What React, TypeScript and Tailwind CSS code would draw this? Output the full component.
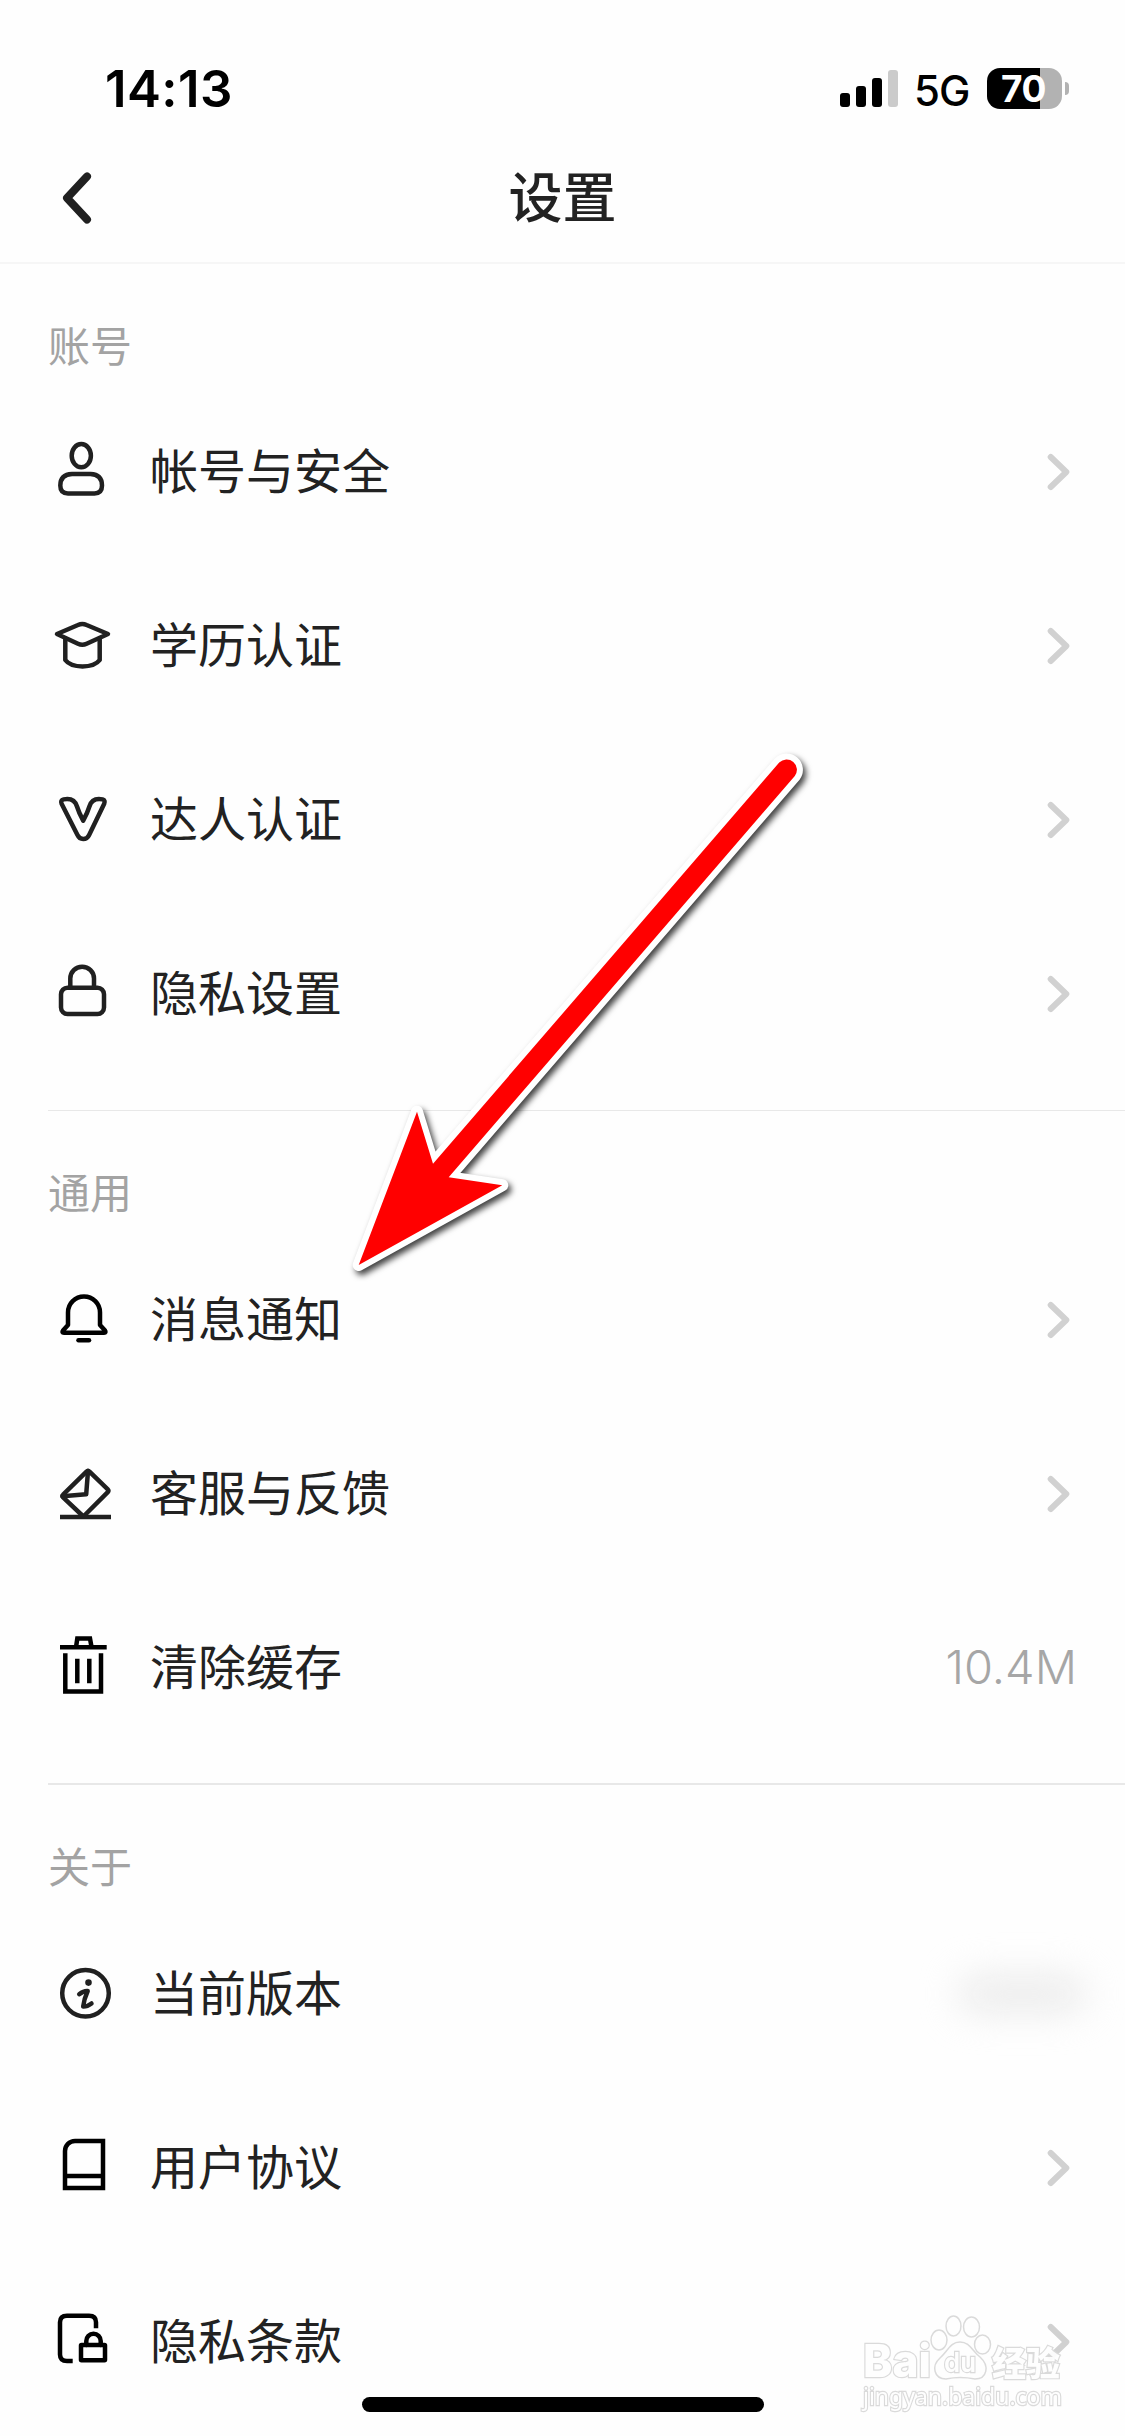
import type { ReactNode } from "react";

const icons: Record<string, ReactNode> = {
  user: (
    <>
      <ellipse cx="33.3" cy="18.7" rx="9.6" ry="11.6" />
      <path d="M24 36.9H42.5Q54 37.4 54 48.5Q54 56.4 46.5 56.4H20Q12.3 56.4 12.3 48.5Q12.3 37.4 24 36.9Z" />
    </>
  ),
  cap: (
    <>
      <path d="M9 23L30 14Q34.3 12 38.6 14L60 23L38.6 32.7Q34.3 34.8 30 32.7Z" />
      <path d="M17.3 27.5V49Q22 55.4 34.5 55.4T51.7 49V27.5" />
    </>
  ),
  vip: (
    <path d="M15.6 14.4Q26.3 12.4 29 21.5Q31 28 35.2 35.7Q39.4 28 41.4 21.5Q44.1 12.4 54.6 14.4Q57.6 15.2 56.2 18.8L41 50.2Q39.2 54 35.2 54T29.6 50.2L13.6 18.8Q12.2 15.2 15.6 14.4Z" />
  ),
  lock: (
    <>
      <rect x="13" y="28.7" width="43" height="26.3" rx="6.5" />
      <path d="M22.3 28.7V19.5A11.85 11.85 0 0 1 46 19.5V28.7" />
    </>
  ),
  bell: (
    <>
      <path d="M20 40V27.5A16 16 0 0 1 52 27.5V40L57 45.5Q58.5 47.7 56 47.7H16Q13.4 47.7 15 45.5Z" />
      <path d="M30.5 55.2H41" />
    </>
  ),
  feedback: (
    <>
      <path d="M38.5 12.7Q40 11.2 41.5 12.7L59.8 30.3Q61.2 31.7 59.8 33.1L35.4 57.5L15.1 38.4Q13.6 37 15.1 35.6Z" />
      <path d="M40 12L38.2 35.3L14.5 37.2" />
      <path d="M12 58H63" strokeLinecap="butt" />
    </>
  ),
  trash: (
    <g strokeLinecap="butt" strokeLinejoin="miter">
      <path d="M12 14.3H58.7M28 14.3L29.3 5.6H42L43.6 14.3M17.3 20.3V58.5H53V20.3M29.3 25.7V50.3M41.3 25.7V50.3" />
    </g>
  ),
  info: (
    <>
      <circle cx="37.5" cy="34.3" r="23.3" />
      <circle cx="40.5" cy="23.6" r="1.7" strokeWidth="3.2" />
      <path d="M31.2 35.2Q36 31.5 39.7 32Q36 40 35.2 47.6Q39 47.8 43.5 44.5" />
    </>
  ),
  book: (
    <path
      d="M27 8H55V55H17V18A10 10 0 0 1 27 8ZM17 43H55"
      strokeLinejoin="miter"
    />
  ),
  privacy: (
    <>
      <path
        d="M24.7 54H19Q12 54 12 47.5V15.2Q12 8.7 19 8.7H41Q48 8.7 48 15.2V21.3"
        strokeLinecap="butt"
      />
      <rect x="33" y="38" width="24" height="15.3" rx="0.5" />
      <path d="M38.3 38V34A7.2 7.2 0 0 1 52.7 34V38" />
    </>
  ),
};

function RowIcon({ name, black }: { name: string; black?: boolean }) {
  return (
    <svg
      width="70"
      height="70"
      viewBox="0 0 70 70"
      fill="none"
      stroke={black ? "#000" : "#202020"}
      strokeWidth="4.5"
      strokeLinecap="round"
      strokeLinejoin="round"
      className="shrink-0"
    >
      {icons[name]}
    </svg>
  );
}

function Chevron() {
  return (
    <svg
      width="24"
      height="38"
      viewBox="0 0 24 38"
      fill="none"
      stroke="#d1d1d1"
      strokeWidth="6"
      strokeLinecap="round"
      strokeLinejoin="round"
      className="mr-[4px]"
    >
      <path d="M3.7 4L19.3 19L3.7 34" />
    </svg>
  );
}

type RowProps = {
  icon: string;
  label: string;
  black?: boolean;
  trailing?: ReactNode;
};

function Row({ icon, label, black, trailing = <Chevron /> }: RowProps) {
  return (
    <li className="flex h-[174px] items-center pr-[50px] pl-12">
      <RowIcon name={icon} black={black} />
      <span className="ml-[32px] flex-1 pb-[9px] text-[48px] leading-[70px] text-[#222]">
        {label}
      </span>
      {trailing}
    </li>
  );
}

function SectionTitle({ children }: { children: ReactNode }) {
  return (
    <h2 className="flex h-[122px] items-center pt-[38px] pl-12 text-[42px] leading-[60px] text-[#a3a3a3]">
      {children}
    </h2>
  );
}

function StatusBar() {
  return (
    <div className="flex h-[132px] items-start justify-between pr-[56px] pl-[105px] font-[Inter] text-black">
      <span className="mt-[59px] text-[51px] leading-[60px] font-semibold tracking-[0.4px]">
        14:13
      </span>
      <div className="mt-[68px] flex items-start">
        <div className="mt-[2px] flex h-[37px] items-end gap-[6px]">
          <i className="h-[14px] w-[10px] rounded-[3px] bg-black" />
          <i className="h-[21px] w-[10px] rounded-[3px] bg-black" />
          <i className="h-[29px] w-[10px] rounded-[3px] bg-black" />
          <i className="h-[37px] w-[10px] rounded-[3px] bg-[#cbcbcb]" />
        </div>
        <span className="ml-[16px] w-[73px] pt-px text-[42px] leading-[44px] font-medium tracking-[-1px]">
          5G
        </span>
        <div className="flex h-[41px] w-[75px] items-center justify-center rounded-[13px] bg-[linear-gradient(90deg,#000_53px,#b2b2b2_53px)] pr-[2px] text-[37px] leading-[41px] font-bold tracking-[-0.5px] text-white">
          70
        </div>
        <i className="mt-[14px] ml-[3px] h-[13px] w-[4px] rounded-r-full bg-[#b2b2b2]" />
      </div>
    </div>
  );
}

function Watermark() {
  return (
    <svg
      width="220"
      height="110"
      viewBox="0 0 220 110"
      className="absolute right-[45px] bottom-[16px]"
      fill="#fefefe"
      stroke="#d9d9d9"
      strokeWidth="1.5"
      opacity="0.95"
    >
      <g>
        <ellipse cx="79" cy="30" rx="8" ry="10" />
        <ellipse cx="93.5" cy="16" rx="7.5" ry="10" />
        <ellipse cx="111.5" cy="17" rx="8" ry="10" />
        <ellipse cx="122.5" cy="34.5" rx="8" ry="9.5" />
        <path d="M100 32C110 32 112 41 120 47C130 56 127 69 115 69Q100 66 86 69C74 69 71 56 80 48C88 41 90 32 100 32Z" />
      </g>
      <g
        fontFamily="Inter, 'Noto Sans CJK SC', sans-serif"
        strokeWidth="2.4"
        paintOrder="stroke"
      >
        <text x="3" y="67" fontSize="45" fontWeight="800" textLength="68" lengthAdjust="spacingAndGlyphs">
          Bai
        </text>
        <text x="84" y="62" fontSize="27" fontWeight="600" textLength="32" lengthAdjust="spacingAndGlyphs">
          du
        </text>
        <text x="132" y="66" fontSize="34" fontWeight="900" textLength="68">
          经验
        </text>
        <text x="3" y="95" fontSize="24" fontFamily="'Noto Sans', sans-serif" textLength="199" lengthAdjust="spacingAndGlyphs">
          jingyan.baidu.com
        </text>
      </g>
    </svg>
  );
}

function PointerArrow() {
  return (
    <svg
      width="480"
      height="560"
      viewBox="340 740 480 560"
      className="pointer-events-none absolute top-[740px] left-[340px] drop-shadow-[3px_4px_3px_rgba(0,0,0,0.75)]"
    >
      <path
        d="M358.7 1265L417 1111.7L433 1163.7L779.2 762.6A10.3 10.3 0 0 1 794.8 776L448.7 1177.3L502.3 1185.3Z"
        fill="#f00"
        stroke="#fff"
        strokeWidth="12"
        strokeLinejoin="round"
        paintOrder="stroke"
      />
    </svg>
  );
}

export default function App() {
  return (
    <main className="relative h-[2436px] w-[1125px] overflow-hidden bg-[#fefefe] font-['Noto_Sans_CJK_SC',sans-serif]">
      <header className="h-[264px] border-b-2 border-[#f6f6f6]">
        <StatusBar />
        <div className="grid h-[130px] grid-cols-[1fr_auto_1fr] items-center">
          <svg
            width="40"
            height="60"
            viewBox="0 0 40 60"
            fill="none"
            stroke="#202020"
            strokeWidth="8"
            strokeLinecap="round"
            strokeLinejoin="round"
            className="ml-[56px]"
          >
            <path d="M31 9.5L11 31L31 52.5" />
          </svg>
          <h1 className="pb-[4px] text-[54px] leading-[80px] font-medium text-[#222]">
            设置
          </h1>
        </div>
      </header>

      <section className="h-[847px]">
        <SectionTitle>账号</SectionTitle>
        <ul className="-mt-px">
          <Row icon="user" label="帐号与安全" />
          <Row icon="cap" label="学历认证" />
          <Row icon="vip" label="达人认证" />
          <Row icon="lock" label="隐私设置" />
        </ul>
        <hr className="mt-[29px] ml-12 border-[#e8e8e8]" />
      </section>

      <section className="h-[674px]">
        <SectionTitle>通用</SectionTitle>
        <ul>
          <Row icon="bell" label="消息通知" black />
          <Row icon="feedback" label="客服与反馈" />
          <Row
            icon="trash"
            label="清除缓存"
            black
            trailing={
              <span className="-mr-[2px] pb-[3px] font-[Inter] text-[47px] leading-[60px] font-[350] text-[#a6a6a6]">
                10.4M
              </span>
            }
          />
        </ul>
        <hr className="mt-[28px] ml-12 border-t-2 border-[#e8e8e8]" />
      </section>

      <section>
        <SectionTitle>关于</SectionTitle>
        <ul>
          <Row
            icon="info"
            label="当前版本"
            trailing={
              <span className="-mr-[10px] h-[36px] w-[126px] rounded-full bg-[#ebebeb] blur-[18px]" />
            }
          />
          <Row icon="book" label="用户协议" black />
          <Row icon="privacy" label="隐私条款" black />
        </ul>
      </section>

      <PointerArrow />
      <Watermark />
      <div className="absolute bottom-[24px] left-[362px] h-[15px] w-[402px] rounded-full bg-black" />
    </main>
  );
}
